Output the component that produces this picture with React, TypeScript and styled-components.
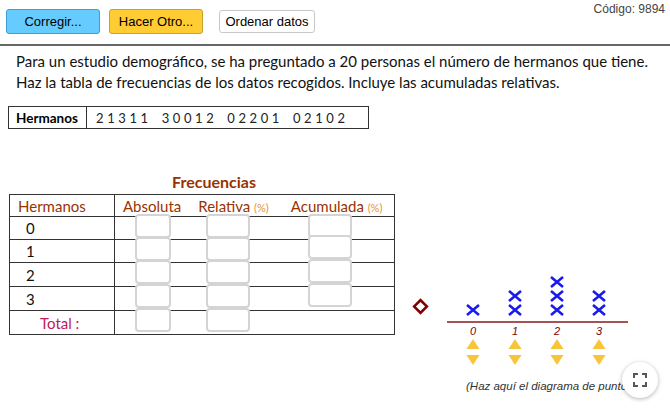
import React from "react"
import styled, { createGlobalStyle } from "styled-components"

const GlobalStyle = createGlobalStyle`
  body {
    margin: 0;
    background: #fff;
  }
`

const Applet = styled.div`
  position: relative;
  width: 670px;
  height: 413px;
  overflow: hidden;
  background: #fff;
  font-family: "Liberation Sans", Arial, sans-serif;
`

const TopBar = styled.div`
  height: 46px;
  display: flex;
  align-items: flex-start;
  padding: 9px 0 0 6px;
  box-sizing: border-box;
  border-bottom: 2px solid #666;
`

const Btn = styled.button<{ $kind: "blue" | "yellow" | "white" }>`
  height: ${p => (p.$kind === "white" ? "23px" : "25px")};
  width: ${p => (p.$kind === "white" ? "96px" : "94px")};
  margin-top: ${p => (p.$kind === "white" ? "1px" : "0")};
  margin-right: ${p => (p.$kind === "blue" ? "9px" : "16px")};
  padding: 0;
  border-radius: 3px;
  font-family: "Liberation Sans", Arial, sans-serif;
  font-size: 13px;
  color: #000;
  background: ${p => (p.$kind === "blue" ? "#66ccff" : p.$kind === "yellow" ? "#ffcc33" : "#fff")};
  border: 1px solid ${p => (p.$kind === "blue" ? "#3d9fd6" : p.$kind === "yellow" ? "#c9a02a" : "#c8c8c8")};
`

const Code = styled.span`
  margin-left: auto;
  margin-right: 5px;
  margin-top: -7px;
  font-size: 12px;
  color: #444;
`

const Content = styled.div`
  padding: 5px 0 0 16px;
`

const Statement = styled.p`
  margin: 0;
  font-family: "Lato", sans-serif;
  font-size: 15px;
  line-height: 21px;
  color: #111;
`

const DataBox = styled.div`
  display: flex;
  width: 359px;
  height: 21px;
  margin: 13px 0 0 -8px;
  border: 1px solid #333;
  font-family: "Lato", sans-serif;
  font-size: 13px;
  align-items: center;
`

const DataLabel = styled.span`
  width: 78px;
  height: 100%;
  display: flex;
  align-items: center;
  padding-left: 7px;
  box-sizing: border-box;
  font-size: 13.5px;
  font-weight: bold;
  border-right: 1px solid #333;
`

const DataValues = styled.span`
  padding-left: 9px;
  letter-spacing: 3.6px;
  word-spacing: 3px;
  color: #222;
`

const Lower = styled.div`
  display: flex;
  margin-top: 43px;
`

const TableBlock = styled.div`
  margin-left: 9px;
  width: 386px;
  font-family: "Lato", sans-serif;
`

const Title = styled.div`
  text-align: center;
  padding-left: 24px;
  height: 22px;
  font-weight: bold;
  font-size: 16px;
  color: #993300;
`

const Table = styled.div`
  border: 1px solid #333;
`

const Row = styled.div<{ $h: number }>`
  display: flex;
  height: ${p => p.$h}px;
  border-bottom: 1px solid #333;
  &:last-child {
    border-bottom: none;
  }
`

const LabelCell = styled.div<{ $color?: string; $indent?: number }>`
  width: 105px;
  flex: none;
  border-right: 1px solid #333;
  display: flex;
  align-items: center;
  padding-left: ${p => p.$indent ?? 16}px;
  box-sizing: border-box;
  font-size: 15px;
  color: ${p => p.$color ?? "#111"};
`

const HeadCells = styled.div`
  display: flex;
  align-items: center;
  padding-left: 8px;
  font-size: 15px;
  color: #993300;
`

const HeadText = styled.span<{ $gap?: number }>`
  margin-left: ${p => p.$gap ?? 0}px;
  white-space: nowrap;
`

const Pct = styled.span`
  font-size: 11px;
  color: #e69138;
`

const Boxes = styled.div`
  display: flex;
  align-items: flex-start;
  padding-left: 20px;
`

const InputBox = styled.div<{ $w: number; $gap: number; $shift?: number }>`
  width: ${p => p.$w}px;
  height: 24px;
  margin-left: ${p => p.$gap}px;
  margin-top: ${p => -3 + (p.$shift ?? 0)}px;
  box-sizing: border-box;
  background: #fff;
  border: 2px solid #d4d4d4;
  border-radius: 4px;
  flex: none;
`

const ChartBlock = styled.div`
  margin-left: 15px;
  display: flex;
  flex-direction: column;
`

const Chart = styled.svg`
  margin-top: 102px;
  display: block;
`

const Caption = styled.div`
  margin: 6px 0 0 56px;
  font-size: 11.5px;
  font-style: italic;
  color: #333;
  white-space: nowrap;
`

const FullscreenBtn = styled.div`
  position: absolute;
  left: 622px;
  top: 362px;
  width: 36px;
  height: 36px;
  border-radius: 50%;
  background: #fff;
  box-shadow: 0 1px 4px rgba(0, 0, 0, 0.3);
  display: flex;
  align-items: center;
  justify-content: center;
`

const rows = [
  { label: "0", h: 22, acuShift: 0 },
  { label: "1", h: 22, acuShift: -2 },
  { label: "2", h: 23, acuShift: -1 },
  { label: "3", h: 23, acuShift: -1 },
]

const counts = [1, 2, 3, 2]

function Cross({ x, y }: { x: number; y: number }) {
  return (
    <path
      d={`M${x - 6} ${y - 5}L${x + 6} ${y + 5}M${x + 6} ${y - 5}L${x - 6} ${y + 5}`}
      stroke="#1a1aee"
      strokeWidth={2.6}
      fill="none"
    />
  )
}

function DotPlot() {
  // svg origin sits at page (410, 274)
  const cols = [63, 105, 147, 189]
  return (
    <Chart width="225" height="100" viewBox="0 0 225 100">
      <rect x="6" y="28" width="9" height="9" transform="rotate(45 10.5 32.5)" fill="#fff" stroke="#800000" strokeWidth="2.5" />
      <line x1="37" y1="48" x2="218" y2="48" stroke="#8b1a1a" strokeWidth="1.5" />
      {cols.map((cx, i) => (
        <g key={i}>
          {Array.from({ length: counts[i] }).map((_, k) => (
            <Cross key={k} x={cx} y={36 - k * 14} />
          ))}
          <text x={cx} y="61" textAnchor="middle" fontSize="11" fontStyle="italic" fill="#800000" fontFamily="Liberation Sans, Arial, sans-serif">
            {i}
          </text>
          <polygon points={`${cx - 6.5},75 ${cx + 6.5},75 ${cx},65`} fill="#f8c43a" />
          <polygon points={`${cx - 6.5},81 ${cx + 6.5},81 ${cx},91`} fill="#f8c43a" />
        </g>
      ))}
    </Chart>
  )
}

export default function App() {
  return (
    <Applet>
      <GlobalStyle />
      <TopBar>
        <Btn $kind="blue">Corregir...</Btn>
        <Btn $kind="yellow">Hacer Otro...</Btn>
        <Btn $kind="white">Ordenar datos</Btn>
        <Code>Código: 9894</Code>
      </TopBar>
      <Content>
        <Statement>
          Para un estudio demográfico, se ha preguntado a 20 personas el número de hermanos que tiene.
        </Statement>
        <Statement>
          Haz la tabla de frecuencias de los datos recogidos. Incluye las acumuladas relativas.
        </Statement>
        <DataBox>
          <DataLabel>Hermanos</DataLabel>
          <DataValues>21311 30012 02201 02102</DataValues>
        </DataBox>
      </Content>
      <Lower>
        <TableBlock>
          <Title>Frecuencias</Title>
          <Table>
            <Row $h={21}>
              <LabelCell $color="#993300" $indent={8}>Hermanos</LabelCell>
              <HeadCells>
                <HeadText>Absoluta</HeadText>
                <HeadText $gap={17}>
                  Relativa <Pct>(%)</Pct>
                </HeadText>
                <HeadText $gap={22}>
                  Acumulada <Pct>(%)</Pct>
                </HeadText>
              </HeadCells>
            </Row>
            {rows.map(r => (
              <Row key={r.label} $h={r.h}>
                <LabelCell>{r.label}</LabelCell>
                <Boxes>
                  <InputBox $w={36} $gap={0} />
                  <InputBox $w={44} $gap={35} />
                  <InputBox $w={44} $gap={58} $shift={r.acuShift} />
                </Boxes>
              </Row>
            ))}
            <Row $h={23}>
              <LabelCell $color="#c2185b" $indent={30}>Total :</LabelCell>
              <Boxes>
                <InputBox $w={36} $gap={0} />
                <InputBox $w={44} $gap={35} />
              </Boxes>
            </Row>
          </Table>
        </TableBlock>
        <ChartBlock>
          <DotPlot />
          <Caption>(Haz aquí el diagrama de puntos)</Caption>
        </ChartBlock>
      </Lower>
      <FullscreenBtn>
        <svg width="14" height="14" viewBox="0 0 14 14" fill="none" stroke="#555" strokeWidth="2">
          <path d="M1 5V1h4M9 1h4v4M13 9v4H9M5 13H1V9" />
        </svg>
      </FullscreenBtn>
    </Applet>
  )
}
